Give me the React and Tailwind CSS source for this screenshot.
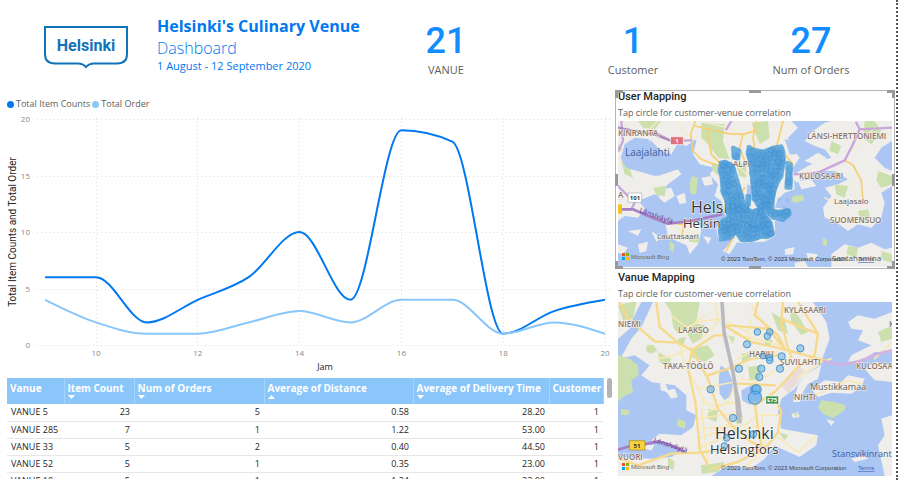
import React from "react";

const hours = [9, 10, 11, 12, 13, 14, 15, 16, 17, 18, 19, 20];
const itemCounts = [6, 6, 2, 4, 6, 10, 4, 19, 18, 1, 3, 4];
const orders = [4, 2, 1, 1, 2, 3, 2, 4, 4, 1, 2, 1];

const xAt = (h) => 96 + (h - 10) * 50.9;
const yAt = (v) => 235 - v * 11.3;

// Monotone cubic interpolation, so that the line never overshoots its data.
function monotonePath(values) {
  const pts = values.map((v, i) => [xAt(hours[i]), yAt(v)]);
  const n = pts.length;
  const slope = [];
  for (let i = 0; i < n - 1; i++) {
    slope.push((pts[i + 1][1] - pts[i][1]) / (pts[i + 1][0] - pts[i][0]));
  }
  const m = new Array(n).fill(0);
  for (let i = 1; i < n - 1; i++) {
    const a = slope[i - 1];
    const b = slope[i];
    m[i] = (Math.sign(a) + Math.sign(b)) * Math.min(Math.abs(a), Math.abs(b), Math.abs(a + b) / 4);
  }
  m[0] = (3 * slope[0] - m[1]) / 2;
  m[n - 1] = (3 * slope[n - 2] - m[n - 2]) / 2;
  let d = `M${pts[0][0]},${pts[0][1]}`;
  for (let i = 0; i < n - 1; i++) {
    const [x0, y0] = pts[i];
    const [x1, y1] = pts[i + 1];
    const k = (x1 - x0) / 3;
    d += `C${x0 + k},${y0 + m[i] * k} ${x1 - k},${y1 - m[i + 1] * k} ${x1},${y1}`;
  }
  return d;
}

function Logo() {
  return (
    <svg viewBox="0 0 84 43" className="h-[43px] w-[84px]" role="img" aria-label="Helsinki">
      <path
        d="M1,1H83V28Q83,37.5 73,37.5H50Q45,37.5 42,41Q39,37.5 34,37.5H11Q1,37.5 1,28Z"
        fill="#fff"
        stroke="#1173b8"
        strokeWidth="2"
      />
      <text x="42" y="25" textAnchor="middle" className="fill-[#1173b8] font-['Roboto',sans-serif] text-[16px] font-bold">
        Helsinki
      </text>
    </svg>
  );
}

function Kpi({ value, label }) {
  return (
    <div className="flex flex-col items-center pt-5">
      <div className="font-['Roboto',sans-serif] text-[36px] leading-[42px] font-medium text-[#118dff]">{value}</div>
      <div className="text-[11px] leading-4 text-[#605e5c]">{label}</div>
    </div>
  );
}

function LegendItem({ dot, label }) {
  return (
    <span className="flex items-center gap-[2px]">
      <span className={`size-[7px] rounded-full ${dot}`} />
      {label}
    </span>
  );
}

function LineChart() {
  return (
    <section className="pt-2">
      <div className="flex items-center gap-[2px] pl-[7px] text-[9px] leading-3 text-[#605e5c]">
        <LegendItem dot="bg-[#0078f0]" label="Total Item Counts" />
        <LegendItem dot="bg-[#8ac6fa]" label="Total Order" />
      </div>
      <svg viewBox="0 0 612 266" className="block w-full font-['Open_Sans',sans-serif]">
        <g stroke="#dcdcdc" strokeDasharray="1 3">
          {[0, 5, 10, 15, 20].map((v) => (
            <line key={v} x1="37" x2="610" y1={Math.round(yAt(v)) + 0.5} y2={Math.round(yAt(v)) + 0.5} />
          ))}
          {[10, 12, 14, 16, 18, 20].map((h) => (
            <line key={h} x1={Math.floor(xAt(h)) + 0.5} x2={Math.floor(xAt(h)) + 0.5} y1="8" y2="235" />
          ))}
        </g>
        <g className="fill-[#8a8886] text-[8px]">
          {[0, 5, 10, 15, 20].map((v) => (
            <text key={v} x="30" y={yAt(v) + 3} textAnchor="end">{v}</text>
          ))}
          {[10, 12, 14, 16, 18, 20].map((h) => (
            <text key={h} x={xAt(h)} y="246" textAnchor="middle">{h}</text>
          ))}
        </g>
        <text x="325" y="260" textAnchor="middle" className="fill-[#252423] text-[9px]">Jam</text>
        <text transform="translate(16 122) rotate(-90)" textAnchor="middle" className="fill-[#252423] font-['Roboto',sans-serif] text-[10px]">
          Total Item Counts and Total Order
        </text>
        <path d={monotonePath(itemCounts)} fill="none" stroke="#0078f0" strokeWidth="2" />
        <path d={monotonePath(orders)} fill="none" stroke="#8ac6fa" strokeWidth="2" />
      </svg>
    </section>
  );
}

const columns = [
  { name: "Vanue", width: "w-[57px]" },
  { name: "Item Count", width: "w-[70px]", sort: "down" },
  { name: "Num of Orders", width: "w-[130px]", sort: "down" },
  { name: "Average of Distance", width: "w-[149px]", sort: "up" },
  { name: "Average of Delivery Time", width: "w-[136px]", sort: "down" },
  { name: "Customer", width: "w-[54px]" },
];

const rows = [
  ["VANUE 5", "23", "5", "0.58", "28.20", "1"],
  ["VANUE 285", "7", "1", "1.22", "53.00", "1"],
  ["VANUE 33", "5", "2", "0.40", "44.50", "1"],
  ["VANUE 52", "5", "1", "0.35", "23.00", "1"],
  ["VANUE 10", "5", "1", "1.24", "33.00", "1"],
];

function VenueTable() {
  return (
    <section className="flex h-[101px] gap-[3px] overflow-hidden pr-px pl-[7px]">
      <table className="w-full table-fixed self-start text-[9px]">
        <thead>
          <tr className="h-[26px] bg-[#8ac6fa] text-left text-[10px] text-white">
            {columns.map((c) => (
              <th key={c.name} scope="col" className={`border-r border-[#a6d3fb] p-0 pt-1 pl-[3px] align-top leading-3 font-bold whitespace-nowrap ${c.width}`}>
                {c.name}
                {c.sort && (
                  <svg viewBox="0 0 7 4" className="mt-px block h-1 w-[7px] fill-white">
                    <path d={c.sort === "up" ? "M0,4L3.5,0L7,4Z" : "M0,0H7L3.5,4Z"} />
                  </svg>
                )}
              </th>
            ))}
          </tr>
        </thead>
        <tbody>
          {rows.map((r) => (
            <tr key={r[0]} className="h-[17px] border-b border-[#e6e6e6]">
              {r.map((cell, i) => (
                <td key={i} className={`p-0 leading-4 text-[#252423] ${i === 0 ? "pl-1" : "pr-1 text-right"}`}>
                  {cell}
                </td>
              ))}
            </tr>
          ))}
        </tbody>
      </table>
      <div className="h-5 w-[5px] shrink-0 rounded-full bg-[#b3b3b3]" />
    </section>
  );
}

function insidePolygon(x, y, poly) {
  let inside = false;
  for (let i = 0, j = poly.length - 1; i < poly.length; j = i++) {
    const [xi, yi] = poly[i];
    const [xj, yj] = poly[j];
    if (yi > y !== yj > y && x < ((xj - xi) * (y - yi)) / (yj - yi) + xi) inside = !inside;
  }
  return inside;
}

const userAreas = [
  [[308,125],[322,122],[343,134],[354,165],[368,215],[382,262],[400,272],[432,262],[438,280],[458,305],[464,340],[450,347],[430,347],[400,357],[370,357],[354,332],[335,352],[308,356],[306,330],[312,300],[332,290],[325,240],[313,210],[313,180],[306,150]],
  [[345,80],[363,88],[360,112],[347,110]],
  [[392,78],[410,87],[440,92],[465,80],[490,76],[496,95],[496,125],[490,165],[476,190],[466,220],[462,266],[482,275],[482,292],[465,290],[445,270],[425,262],[410,235],[403,180],[397,120],[390,100]],
  [[508,125],[518,130],[518,200],[505,200],[508,165]],
  [[475,275],[512,268],[514,280],[495,297],[475,292]],
  [[388,225],[394,225],[392,252],[388,252]],
];

function userCircles() {
  let seed = 7;
  const random = () => {
    seed = (seed * 16807) % 2147483647;
    return seed / 2147483647;
  };
  const out = [];
  while (out.length < 900) {
    const x = 296 + random() * 230;
    const y = 68 + random() * 296;
    if (userAreas.some((p) => insidePolygon(x, y, p))) out.push([x, y]);
  }
  return out;
}

const label = "font-['Open_Sans',sans-serif]";
const district = `${label} fill-[#8a7468] text-[8px] font-semibold stroke-[#f7f5f2] [paint-order:stroke] [stroke-width:1px]`;
const place = `${label} fill-[#5c5a5a] stroke-[#f4f2ef] [paint-order:stroke] [stroke-width:1px]`;
const city = `${label} fill-[#333] stroke-white [paint-order:stroke] [stroke-width:1px]`;
const water = `${label} fill-[#3d5f9e]`;

function BingMark({ y }) {
  return (
    <g>
      <rect x="4" y={y} width="3" height="3" fill="#f25022" />
      <rect x="8" y={y} width="3" height="3" fill="#7fba00" />
      <rect x="4" y={y + 4} width="3" height="3" fill="#00a4ef" />
      <rect x="8" y={y + 4} width="3" height="3" fill="#ffb900" />
      <text x="13" y={y + 6} className="fill-[#666] font-['Liberation_Sans',sans-serif] text-[6px]">Microsoft Bing</text>
    </g>
  );
}

function UserMap() {
  return (
    <svg viewBox="0 0 274 146" className="block w-full" role="img" aria-label="Map of customers in Helsinki">
      <rect width="274" height="146" fill="#abc6f2" />
      <g transform="scale(.33333)" strokeLinejoin="round" strokeLinecap="round">
        <g fill="#f0eeea">
          <path d="M0,0H215L240,20L232,55L205,75L180,65L160,100L130,90L95,55L50,50L20,70L10,110L20,150L60,185L95,190L120,215L60,240L0,235Z" />
          <path d="M215,0H520L540,20L510,50L530,90L545,110L525,140L530,205L500,215L480,235L470,260L515,265L510,292L470,300L472,345L440,362L360,365L345,340L300,355L295,320L325,290L310,240L290,225L300,190L275,160L290,140L245,130L225,100L235,60L205,30Z" />
          <path d="M585,30L620,5L640,0H822V60L790,80L770,110L800,140L822,150V195L790,215L800,245L790,290L760,320L720,310L690,330L650,300L620,290L615,260L640,225L620,200L660,190L690,175L650,150L600,150L560,170L535,185L520,165L560,140L600,120L640,110L620,85L590,75L560,60Z" />
          <path d="M140,300L190,310L240,300L250,330L240,370L215,400L205,372L175,360L150,345Z" />
          <path d="M20,140L60,150L120,165L180,145L190,160L150,190L120,225L80,205L40,175Z" />
          <path d="M0,235L60,240L80,260L60,290L20,285L0,300Z" />
          <path d="M125,205L160,200L170,225L140,245L122,230ZM175,225L200,215L205,245L185,250ZM250,170L280,165L285,190L260,195Z" />
          <path d="M560,120L600,95L625,110L600,135ZM540,180L580,175L595,195L550,205Z" />
          <path d="M30,330L70,325L60,345ZM60,370L90,362L85,390L65,395ZM100,330L130,350L115,362ZM0,370L30,380L15,400L0,395ZM255,345L280,350L270,370ZM315,390L350,350L365,352L335,400Z" />
          <path d="M500,385L530,378L525,400L502,402ZM565,395L600,400L590,420L570,415ZM640,400L680,370L720,380L760,365L800,385L822,380V438H640ZM530,425L560,420L570,438H530Z" />
        </g>
        <g fill="#cbe0ac">
          <path d="M222,165L240,170L235,220L218,218L215,190Z" />
          <path d="M60,0H130L110,25L75,20ZM10,120L30,130L45,170L20,160ZM250,5L320,10L315,60L335,115L300,110L270,70L250,50ZM280,125L300,135L300,165L285,150Z" />
          <path d="M105,200L145,195L140,225L115,222ZM155,360L170,372L165,395L155,385ZM205,345L240,340L245,365L215,362Z" />
          <path d="M740,0H770L790,30L760,70L735,50ZM640,60L670,75L660,100L635,90ZM780,150L822,165V190L790,200L775,180ZM650,190L690,195L680,230L655,220ZM720,270L750,265L760,300L730,305Z" />
          <path d="M525,225L555,222L558,238L535,246L520,240ZM615,350L628,358L625,378L613,370ZM690,375L720,380L715,410L685,400ZM790,390L822,400V425L790,415ZM400,5L450,0L455,50L425,70ZM355,130L385,125L385,170L365,165ZM0,70L14,80L5,95Z" />
        </g>
        <path d="M20,75L60,55L100,62L130,95L160,105L145,150L110,165L60,150L25,140L8,110Z" fill="#abc6f2" />
        <path d="M388,190L410,200L405,240L385,235ZM500,55L540,60L535,100L515,100Z" fill="#abc6f2" />
        <g fill="none" stroke="#f3ead0" strokeWidth="4">
          <path d="M120,0L90,30L95,60M240,0L330,20L420,60M350,130L400,170M170,310L200,340L230,330M700,180L720,250M770,20L700,90M20,0L40,50M180,0L200,40L240,50M620,230L690,270" />
        </g>
        <g fill="none" stroke="#f5cf72" strokeWidth="5">
          <path d="M232,0L218,40L225,90L250,115L305,135M232,15L330,38L375,40L415,28M268,30L280,100L310,130M415,0L405,50L412,90M495,0L480,60L470,90M375,40L365,80L380,120M500,100L525,130L515,165M680,118L705,132L730,180L735,240M160,305L200,312L190,345M330,290L380,200M325,390L355,330" />
        </g>
        <g fill="none" stroke="#c9a6dc" strokeWidth="7">
          <path d="M822,20L725,25L700,80L680,118L600,155L530,160M725,25L715,5M340,0L325,25M10,0L15,60L0,90" />
          <path d="M100,30L140,50L160,60L220,58M0,195L50,245L40,265" />
          <path d="M0,265L45,265L90,285L150,308L220,300L310,280" stroke="#a77fc2" strokeWidth="8" />
          <path d="M0,20L60,32L110,40L160,60" stroke="#a98abf" />
        </g>
        <rect x="158" y="47" width="38" height="24" fill="#e2707a" stroke="#fff" strokeWidth="2" />
        <rect x="31" y="216" width="40" height="28" fill="#fff" stroke="#aaa" strokeWidth="2" />
        <rect x="-4" y="250" width="16" height="28" fill="#f3c31c" />
      </g>
      <text x="59" y="22" textAnchor="middle" className="fill-white font-['Open_Sans',sans-serif] text-[6px] font-bold">1</text>
      <text x="17" y="79" textAnchor="middle" className="fill-[#333] font-['Open_Sans',sans-serif] text-[6px] font-bold">101</text>
      <text x="0" y="15" className={district}>KINRANTA</text>
      <text x="7" y="35" className={`${water} text-[10px]`}>Laajalahti</text>
      <text x="0" y="77" className={district}>A</text>
      <text transform="translate(21 91) rotate(20)" className="fill-[#7b519d] font-['Open_Sans',sans-serif] text-[7px] font-semibold">Länsiväylä</text>
      <text x="39" y="118" className={`${place} text-[8px]`}>Lauttasaari</text>
      <text x="115" y="46" className={district}>ALPPILA</text>
      <text x="189" y="18" className={district}>LÄNSI-HERTTONIEMI</text>
      <text x="181" y="58" className={district}>KULOSAARI</text>
      <text x="216" y="83" className={`${place} text-[8px]`}>Laajasalo</text>
      <text x="212" y="102" className={district}>SUOMENSUO</text>
      <text x="73" y="92" className={`${city} text-[16px]`}>Helsinki</text>
      <text x="65" y="107" className={`${city} text-[13px]`}>Helsingfors</text>
      <g transform="scale(.33333)">
        <g fill="#57a5dc" stroke="#57a5dc" strokeWidth="12" strokeLinejoin="round" opacity=".85">
          {userAreas.map((p, i) => (
            <polygon key={i} points={p.join(" ")} />
          ))}
        </g>
        <g fill="#5ba9e2" fillOpacity=".15" stroke="#2f83c2" strokeOpacity=".25" strokeWidth="1.5">
          {userCircles().map(([x, y], i) => (
            <circle key={i} cx={x} cy={y} r="8" />
          ))}
          {[[508,237,5],[483,235,5],[498,262,6]].map(([x, y, r]) => (
            <circle key={x} cx={x} cy={y} r={r} />
          ))}
        </g>
      </g>
      <BingMark y={132} />
      <text x="103" y="140" className="fill-[#333] font-['Liberation_Sans',sans-serif] text-[6px]">© 2023 TomTom, © 2023 Microsoft Corporation</text>
      <text x="240" y="140" className="fill-[#3a62b8] font-['Liberation_Sans',sans-serif] text-[6px] underline">Terms</text>
      <text x="214" y="140" className={`${label} fill-[#555] text-[8px]`}>Santahamina</text>
    </svg>
  );
}

const venues = [
  [418,90,10],[455,90,10],[448,102,10],[387,127,11],[547,139,11],[435,162,9],[491,163,11],[455,167,10],[455,175,10],
  [363,200,11],[430,200,11],[486,200,11],[424,225,11],[278,262,11],[412,263,14],[416,262,14],[411,287,20],[345,348,11],
  [406,397,10],[326,408,10],[319,432,10],
];

function VenueMap() {
  return (
    <svg viewBox="0 0 274 174" className="block w-full" role="img" aria-label="Map of venues in Helsinki">
      <rect width="274" height="174" fill="#abc6f2" />
      <g transform="scale(.33333)" strokeLinejoin="round" strokeLinecap="round">
        <g fill="#f0eeea">
          <path d="M100,0H585L625,60L635,110L605,190L560,220L530,260L490,290L480,330L490,380L600,400L595,430L545,465L490,440L470,430L440,470L400,500L330,490L280,522H0V465L100,470L160,465L200,440L150,425L100,415L125,395L190,400L225,375L235,340L205,325L205,280L170,250L100,240L70,220L95,190L50,160L0,170V60L40,80L75,30Z" />
          <path d="M0,0H70L40,60L20,110L0,120Z" />
          <path d="M670,240L620,235L580,262L600,285L640,272L700,275L730,255L740,230L690,220Z" />
          <path d="M560,220L610,190L600,230L570,245L555,270L545,300L525,300L540,250Z" />
          <path d="M690,60L720,40L770,50L822,30V150L770,150L740,170L690,180L700,160L760,130L720,115L735,85L700,80Z" />
          <path d="M822,190V240L770,235L740,200L770,180ZM822,340L790,350L800,400L780,430L800,522H822Z" />
          <path d="M125,235L140,240L150,265L170,260L180,285L160,290L145,270L128,265ZM75,425L110,430L100,445L78,440ZM625,352L650,358L640,372ZM520,335L540,330L545,345L525,348ZM700,470L740,460L750,470L710,480Z" />
        </g>
        <path d="M75,0H105L70,75L40,110L10,165L0,168V110L35,80Z" fill="#abc6f2" />
        <g fill="#cbe0ac">
          <path d="M140,0H245L235,60L180,95L165,75L160,30ZM215,60L260,70L250,110L225,125L210,100ZM0,10L40,0H55L45,50L15,55ZM85,130L105,128L118,145L100,155L85,148ZM180,110L205,105L195,130L180,128Z" />
          <path d="M0,160L35,170L60,190L62,220L40,235L45,270L15,285L0,300ZM10,320L35,325L30,340L8,338Z" />
          <path d="M120,150L160,170L150,195L125,180ZM215,140L270,130L290,160L260,180L220,165ZM370,155L400,150L395,175L372,180ZM390,195L430,190L425,230L395,235ZM440,110L465,115L455,135L440,130ZM515,25L540,40L570,90L550,100L520,60Z" />
          <path d="M610,295L650,300L683,310L680,325L645,348L620,338L600,318ZM270,320L300,325L295,360L270,350ZM150,465L170,480L165,505L150,495ZM330,100L350,105L345,125ZM350,345L375,340L372,365L355,365ZM460,30L500,55L510,95L480,85ZM180,350L205,360L200,380L175,370ZM780,90L822,70V110L790,120ZM480,390L510,400L500,415ZM250,490L320,480L300,510L250,515ZM524,332L540,334L535,345Z" />
        </g>
        <path d="M308,190L330,205L345,240L340,280L320,295L305,275L302,230ZM370,265L400,250L430,270L428,300L395,308L372,295Z" fill="#abc6f2" />
        <path d="M490,250L545,195L560,205L540,240L510,275Z" fill="#eadcd8" />
        <g fill="none" stroke="#f8e8b4" strokeWidth="5">
          <path d="M180,90L240,60L310,50M185,125L200,190L240,260L260,300M240,260L350,240M270,330L330,300L350,250M210,140L170,160L120,170M250,300L290,310L370,300M160,40L210,80L260,40M250,320L260,400L270,480M235,350L350,335M255,380L380,370L420,340H490M240,440L330,400L420,370M330,60L390,90L400,130M345,95L430,115L490,130M400,50L390,90M360,170L400,150L480,150M370,230L420,240L480,200M430,115L440,70L400,10M290,0L300,60L250,110M470,400L540,450L590,405M540,225L610,180L640,170M590,280L690,235L730,245M770,170L822,120M380,500L440,430L430,340M240,410L310,385L350,350" />
        </g>
        <g fill="none" stroke="#f7d98c" strokeWidth="7">
          <path d="M5,0L30,50L110,118L180,122L222,145L290,100L318,100M115,0L125,75L180,122M318,70L400,120L490,140L620,175M420,0L410,40L480,100L500,140M495,0L490,60L510,140L520,165M222,145L210,200L232,300L245,440L270,490M222,145L270,230L300,320L345,375L400,420L440,440M270,220L330,200L400,170L480,160M600,95L590,160L540,195L470,270L410,310M490,50L560,80L600,95L540,0M470,285L490,330L480,390L450,430L360,480L280,500M0,468L60,490L160,455L240,452L350,440M410,300L420,380L430,430M360,245L470,250M330,70L450,80L500,140" />
        </g>
        <path d="M312,0L318,90L345,210L360,300L364,362" fill="none" stroke="#b9b9bf" strokeWidth="11" strokeLinecap="butt" />
        <path d="M345,220L366,290L372,345H355Z" fill="#b9b9bf" />
        <path d="M618,178L670,188L720,180L770,158L822,145" fill="none" stroke="#d3b2e2" strokeWidth="8" />
        <path d="M0,443L35,433L90,425L120,418L160,430L195,448" fill="none" stroke="#a77fc2" strokeWidth="8" />
        <rect x="35" y="416" width="46" height="28" fill="#f7d23c" stroke="#a98b1e" strokeWidth="2" />
        <rect x="444" y="282" width="38" height="24" fill="#3f9452" stroke="#fff" strokeWidth="2" />
      </g>
      <text x="19" y="146" textAnchor="middle" className="fill-[#333] font-['Open_Sans',sans-serif] text-[6px] font-bold">51</text>
      <text x="154" y="100" textAnchor="middle" className="fill-white font-['Open_Sans',sans-serif] text-[6px] font-bold">E75</text>
      <text x="0" y="25" className={district}>NIEMI</text>
      <text x="60" y="31" className={district}>LAAKSO</text>
      <text x="166" y="11" className={district}>KYLÄSAARI</text>
      <text x="271" y="25" className={district}>K</text>
      <text x="45" y="67" className={district}>TAKA-TÖÖLÖ</text>
      <text x="131" y="55" className={district}>HARJU</text>
      <text x="162" y="63" className={district}>SUVILAHTI</text>
      <text x="238" y="67" className={district}>KULOSAARI</text>
      <text x="176" y="98" className={district}>NIHTI</text>
      <text x="0" y="158" className={district}>VUORI</text>
      <text x="192" y="88" className={`${place} text-[9px]`}>Mustikkamaa</text>
      <text x="214" y="155" className={`${water} text-[9px]`}>Stansvikinranta</text>
      <text transform="translate(35 140) rotate(18)" className="fill-[#7b519d] font-['Open_Sans',sans-serif] text-[7px] font-semibold">Länsiväylä</text>
      <text x="97" y="137" className={`${city} text-[16px]`}>Helsinki</text>
      <text x="92" y="152" className={`${city} text-[13px]`}>Helsingfors</text>
      <g transform="scale(.33333)" fill="#62b0ea" fillOpacity=".55" stroke="#3a87c4" strokeWidth="2.5">
        {venues.map(([x, y, r], i) => (
          <circle key={i} cx={x} cy={y} r={r} />
        ))}
      </g>
      <BingMark y={161} />
      <text x="103" y="168" className="fill-[#444] font-['Liberation_Sans',sans-serif] text-[6px]">© 2023 TomTom, © 2023 Microsoft Corporation</text>
      <text x="240" y="168" className="fill-[#3a62b8] font-['Liberation_Sans',sans-serif] text-[6px] underline">Terms</text>
    </svg>
  );
}

function MapPanel({ title, children }) {
  return (
    <div className="px-[2px] pb-px">
      <h2 className="font-['Roboto',sans-serif] text-[11px] leading-3 font-medium text-[#252423]">{title}</h2>
      <p className="pt-[2px] text-[9px] leading-4 text-[#605e5c]">Tap circle for customer-venue correlation</p>
      {children}
    </div>
  );
}

function SelectionHandles() {
  return (
    <>
      <i className="absolute -top-px -left-px size-2 border-t-[3px] border-l-[3px] border-[#999]" />
      <i className="absolute -top-px -right-px size-2 border-t-[3px] border-r-[3px] border-[#999]" />
      <i className="absolute -bottom-px -left-px size-2 border-b-[3px] border-l-[3px] border-[#999]" />
      <i className="absolute -right-px -bottom-px size-2 border-r-[3px] border-b-[3px] border-[#999]" />
      <i className="absolute -top-px left-1/2 h-[3px] w-3 -translate-x-1/2 bg-[#999]" />
      <i className="absolute -bottom-px left-1/2 h-[3px] w-3 -translate-x-1/2 bg-[#999]" />
      <i className="absolute top-1/2 -left-px h-3 w-[3px] -translate-y-1/2 bg-[#999]" />
      <i className="absolute top-1/2 -right-px h-3 w-[3px] -translate-y-1/2 bg-[#999]" />
    </>
  );
}

export default function App() {
  return (
    <div className="h-screen overflow-hidden bg-white pr-px pb-[2px] font-['Open_Sans','Noto_Sans',sans-serif]">
      <div className="h-full overflow-hidden border-r-2 border-dotted border-[#555]">
        <header className="flex h-[90px]">
          <div className="w-[157px] shrink-0 pt-[26px] pl-11">
            <Logo />
          </div>
          <div className="w-[200px] shrink-0 pt-[14px] whitespace-nowrap text-[#0078f0]">
            <h1 className="text-[16px] leading-6 font-bold">Helsinki&apos;s Culinary Venue</h1>
            <p className="text-[16px] leading-5 font-light">Dashboard</p>
            <p className="text-[11px] leading-4">1 August - 12 September 2020</p>
          </div>
          <div className="grid flex-1 grid-cols-[178fr_196fr_160fr] pr-[5px]">
            <Kpi value="21" label="VANUE" />
            <Kpi value="1" label="Customer" />
            <Kpi value="27" label="Num of Orders" />
          </div>
        </header>
        <main className="flex">
          <div className="min-w-0 flex-1">
            <LineChart />
            <div className="pt-[2px]">
              <VenueTable />
            </div>
          </div>
          <aside className="ml-[3px] w-[281px] shrink-0 pr-px">
            <section className="relative border border-[#b5b5b5]">
              <MapPanel title="User Mapping">
                <UserMap />
              </MapPanel>
              <SelectionHandles />
            </section>
            <section className="px-px pt-[3px]">
              <MapPanel title="Vanue Mapping">
                <VenueMap />
              </MapPanel>
            </section>
          </aside>
        </main>
      </div>
    </div>
  );
}
